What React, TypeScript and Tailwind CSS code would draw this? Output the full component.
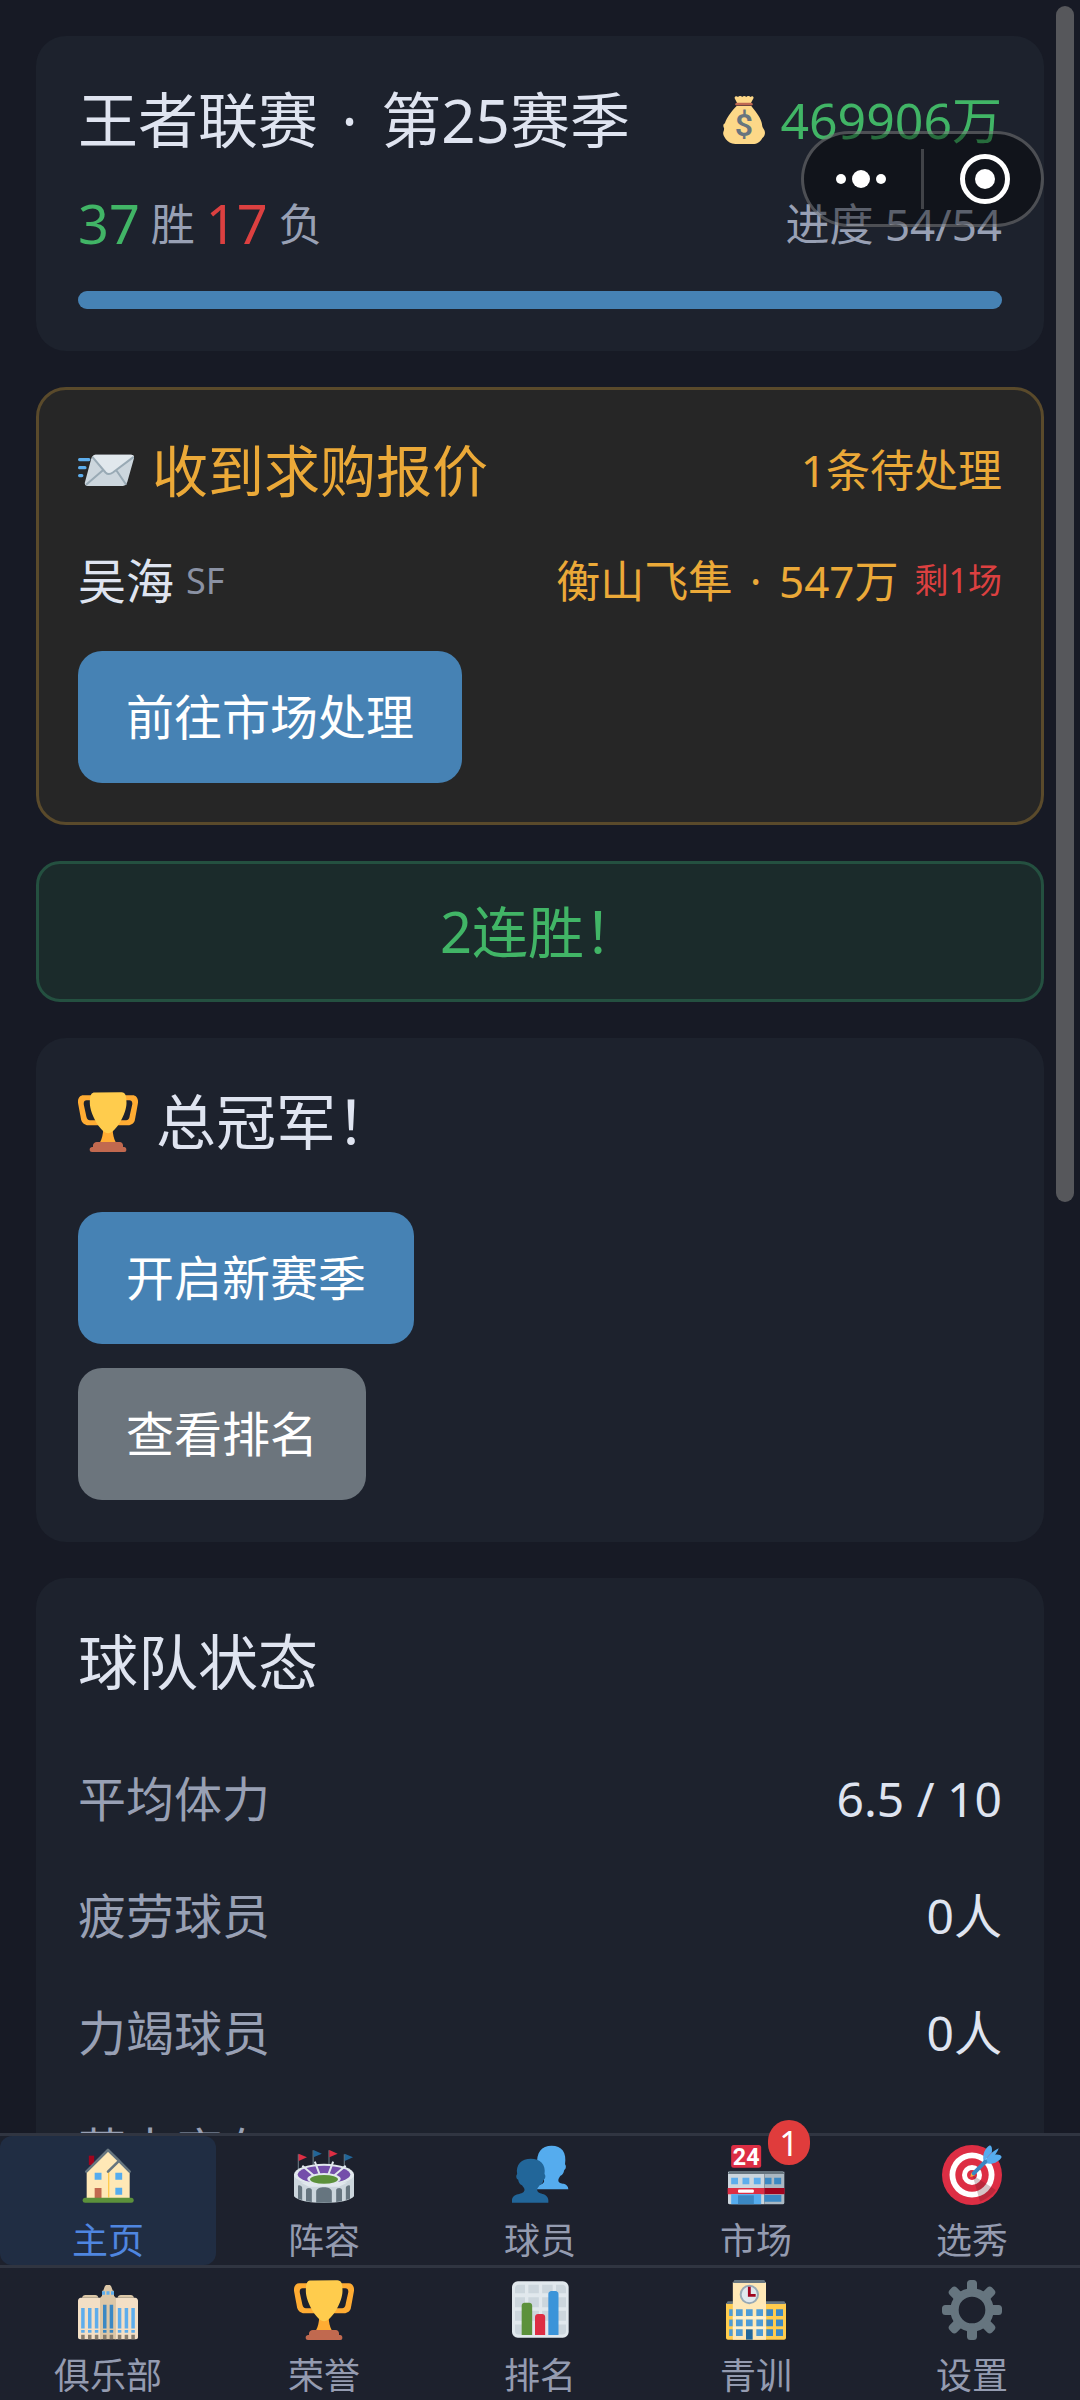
import { useState } from "react"
import type { ReactNode } from "react"

type IconProps = { className?: string; children?: ReactNode };

function Icon({ className = "size-15", children }: IconProps) {
  return (
    <svg viewBox="0 0 36 36" className={`shrink-0 ${className}`} aria-hidden="true">
      {children}
    </svg>
  );
}

function Trophy() {
  return (
    <Icon>
      <path fill="#FFAC33" d="M5.1 5h6C12.200 5 13 4.900 13 6V4c0-1.100-.8-2-1.900-2h-8c-2 0-3.600 2.100-3 5 0 0 1.800 9.400 1.900 10 .4 1.500 2.200 3 4.100 3H13v-5c0 1.100-.8 2-1.900 2h-4c-1.100 0-1.800-1-2-2S3.500 7.700 3.500 7.700C3.200 5.800 4 5 5.100 5zm25.800 0h-6C23.800 5 22 4.900 22 6V4c0-1.100 1.800-2 2.900-2h8c2 0 3.600 2.100 3 5 0 0-1.600 9.400-1.800 10-.3 1.500-2 3-4 3H22v-5c0 1.100 1.800 2 2.900 2h4c1.100 0 1.800-1 2-2s1.600-7.300 1.600-7.300c.4-1.900-.5-2.700-1.600-2.700zM20.800 22h-5.700c0 7-3.300 10-3.300 10h12.300s-3.300-3-3.300-10z" />
      <path fill="#FFCC4D" d="M29.100 6.600c0 6.800-6.800 18.200-11 18.200s-11-11.400-11-18.200c0-5.200 1-6.300 3-6.300l15-.1c2.900 0 4 .7 4 6.400z" />
      <path fill="#C1694F" d="M9 33v-1c0-1.100 1.200-2 2.200-2h13.900c1 0 1.900.9 1.900 2v1h.7c.8 0 1.300.6 1.300 1.400 0 1 0 1.600-1.300 1.600H8.500C7.200 36 7 35.400 7 34.400 7 33.600 7.700 33 8.500 33z" />
    </Icon>
  );
}

function MoneyBag() {
  return (
    <Icon className="size-12">
      <path fill="#FDD888" d="M12.500 7.500h11c2.500 3.300 6 7 7.600 12 .6 1.900.4 3.500 1.300 4.700 2 2.600 1.700 5.300-.6 7.300C30 34.500 28 36 24.500 36h-13C8 36 6 34.500 4.400 32.500c-.7-1.500-2.300-3-2-5 .1-1.200.9-1.900.6-3.500-.6-1.300-1-2.500.7-3.500C5 16 9 11 12.500 7.500z" />
      <path fill="#FDD888" d="M12.800 5.200 11 1.600c-.3-1.400 1.400-2 2.500-.9 1-1 2.400-.9 3.100 0 .9-.9 2.300-.9 3.100 0 .9-1 2.300-.9 3.100 0 1.300-1 2.700-.3 2.300 1l-1.900 3.500z" />
      <rect x="11.500" y="5" width="13" height="2.200" rx="1.100" fill="#BF6952" />
      <text x="18" y="30" textAnchor="middle" fontSize="24" fontWeight="600" fill="#67757F" fontFamily="Roboto, sans-serif">$</text>
    </Icon>
  );
}

function Envelope() {
  return (
    <Icon className="size-14">
      <path d="M1 11.300h6M1 16.500h3.500M1 21.600h1.500" stroke="#5DADEC" strokeWidth="2" strokeLinecap="round" />
      <path fill="#CCD6DD" d="M11.500 8.200h22.700c1.500 0 2.200 1.200 1.700 2.600l-4.200 14.900c-.5 1.500-1.700 2.600-3.200 2.600H6.200c-1.500 0-2.200-1.200-1.700-2.600l4-14.900c.4-1.500 1.600-2.600 3-2.600z" />
      <path d="m5.200 27.500 11-9.500M31 27.500l-6.500-9.500" stroke="#99AAB5" strokeWidth="1.300" />
      <path fill="#E1E8ED" d="M9.300 9.400c.6-.8 1.300-1.200 2.200-1.200h22.700c.9 0 1.500.5 1.700 1.200L22.500 19.600c-1.700 1.200-3.500 1.200-4.700 0z" />
      <path d="m9.200 9.600 8.500 10c1.200 1.200 3 1.200 4.700 0L35.800 9.600" fill="none" stroke="#99AAB5" strokeWidth="1.300" />
    </Icon>
  );
}

function House() {
  return (
    <Icon>
      <path fill="#A0041E" d="M6.500 6.400h3.200V12H6.500z" />
      <path fill="#FFE8B6" d="M5.200 15.500 18 3.200l6.500 6.500 6.500 6V32H5.200z" />
      <path d="M18.400 16v15.500" stroke="#FFCC4D" strokeWidth=".8" />
      <path d="M5 16 18 3l7 6.800M18 16l6.600-6.500L31 16" fill="none" stroke="#66757F" strokeWidth="1.600" strokeLinecap="round" strokeLinejoin="round" />
      <path fill="#55ACEE" d="M10 16.600h4.100v4.200H10zM22.400 16.600h4.100v4.200h-4.100zM22.400 25.600h4.100v4.200h-4.100z" />
      <path fill="#C1694F" d="M10 25.800h4.100V32H10z" />
      <rect x="2.800" y="31.600" width="30.600" height="3" rx="1.500" fill="#5C913B" />
    </Icon>
  );
}

function Stadium() {
  return (
    <Icon>
      <path d="M2.600 5.500V16M11.500 3.200V13M21 3.200V13M30.200 5.500V16" stroke="#66757F" strokeWidth=".7" />
      <path fill="#DD2E44" d="m2.800 5.200 5 2.200-5 2.200zM21.200 3l5 2.200-5 2.200z" />
      <path fill="#226699" d="m11.700 3 5 2.200-5 2.200zM30.400 5.200l5 2.200-5 2.200z" />
      <path fill="#CCD6DD" d="M0 17.500v13.300c2 2.500 9 4 18 4s16-1.500 18-4V17.500z" />
      <ellipse cx="18" cy="17.700" rx="18" ry="6.400" fill="#E1E8ED" />
      <ellipse cx="18" cy="17.700" rx="15.800" ry="5.200" fill="#744EAA" />
      <path d="m5 12.500 7 6M12.500 10l3 8M23.500 10l-3 8M31 12.500l-7 6" stroke="#E1E8ED" strokeWidth="1.200" />
      <path fill="#E1E8ED" d="M4 22.500h28L27 25H9z" />
      <ellipse cx="18" cy="20.300" rx="10" ry="3.500" fill="#E1E8ED" />
      <ellipse cx="18" cy="20.600" rx="8.400" ry="2.600" fill="#5C913B" />
      <path fill="#66757F" d="M13.300 34.600V28c0-3.500 9.400-3.500 9.400 0v6.600zM7.200 33.800V27c0-1.700 3.500-1.700 3.500 0v7.200zM25.300 34.200V27c0-1.700 3.500-1.700 3.500 0v6.800zM2.400 32.300v-7.600c0-1 2.500-.4 2.500 1V33zM31.100 33v-7.300c0-1.400 2.500-2 2.500-1v7.600z" />
    </Icon>
  );
}

function People() {
  return (
    <Icon>
      <path fill="#55ACEE" d="M14 26.600c0-3 6.500-2 6.500-5 0-1-1-2-1.700-3-1.200-.3-1.700-1.500-2-3-.8-.6-1-2.400-.4-3.300C15.500 4.500 19 .4 25 .4s9.200 4 8 11.200c.9.900.6 2.900-.5 3.500-.3 1.700-1 2.900-2.200 3.300-.6.900-1.300 1.700-1.300 2.700 0 1.700 1.800 1.900 3.300 2.200 1.500.4 2.700 1.500 2.700 3.300z" />
      <path fill="#226699" d="M1.200 34.600V33c0-2 1.700-3 3.600-3.500 2-.5 3.900-1 3.900-2.700 0-1-.8-1.700-1.500-2.700-1.300-.3-2-1.500-2.300-3.200-1.200-.6-1.500-2.600-.6-3.500-1-5.700 2.700-9.200 8.200-9.200s9.200 3.500 8.200 9.200c.9.900.6 2.900-.6 3.500-.3 1.700-1 2.900-2.300 3.200-.7 1-1.500 1.700-1.500 2.700 0 1.700 2 2.200 3.900 2.700C21.200 30 23 31 23 33v1.600z" />
    </Icon>
  );
}

function Store() {
  return (
    <Icon>
      <rect x="3.100" y="0" width="18" height="13.600" rx="1.500" fill="#DD2E44" />
      <text x="12.100" y="12" textAnchor="middle" fontSize="14" fontWeight="700" fill="#FFF" fontFamily="Roboto, sans-serif">24</text>
      <path fill="#CCD6DD" d="M1.200 16H23v19.600H2.200a1 1 0 0 1-1-1z" />
      <path fill="#AAB8C2" d="M23 16h12v18.600a1 1 0 0 1-1 1H23z" />
      <path fill="#66757F" d="M2 15.600h32l1 1.800H1.200z" />
      <path fill="#5DADEC" d="M3.100 19.600h4.100v4H3.100zM9.900 19.600H14v4H9.900zM16.700 19.600h4.100v4h-4.100z" />
      <path fill="#3B88C3" d="M23.300 19.600h4v4h-4zM28.900 19.600h4.200v4h-4.200zM23 30h10.200v4H23z" />
      <path fill="#DD2E44" d="M1 25.800h22v3.700H1z" />
      <path fill="#A0041E" d="M23 25.800h12.200v3.700H23z" />
      <path fill="#55ACEE" d="M3.100 29.500h18v6h-18z" />
      <path fill="#3B88C3" d="M7.200 30.200h9.500v5.300H7.200z" />
      <rect x="7.200" y="26.700" width="9.500" height="2" rx=".6" fill="#FFF" />
    </Icon>
  );
}

function Target() {
  return (
    <Icon>
      <circle cx="18" cy="18" r="18" fill="#DD2E44" />
      <circle cx="18" cy="18" r="13.500" fill="#FFF" />
      <circle cx="18" cy="18" r="10" fill="#DD2E44" />
      <circle cx="18" cy="18" r="6" fill="#FFF" />
      <circle cx="18" cy="18" r="3" fill="#DD2E44" />
      <path fill="#58181F" opacity=".25" d="m18.300 18 4.500 15.900c3.500-1.200 7.500-4 9.500-6.900z" />
      <path fill="#FFAC33" d="m17 19.200.6-2.700 2 1.900z" />
      <path fill="#55ACEE" d="M25 9.800C24 5.500 26 1.500 28.800.1c1.200.5 1.400 2.200 1.100 4.300zM26.200 11c4.300 1 8.200-1 9.600-3.800-.5-1.200-2.200-1.700-4.300-1.300z" />
      <path fill="#55ACEE" d="M24.500 11.500C26 8 30.500 3.500 34 2c-1 3.500-5.500 8-8.600 10z" />
      <path d="m19 17 7-7" stroke="#3A87C2" strokeWidth="2.400" strokeLinecap="round" />
    </Icon>
  );
}

function Club() {
  return (
    <Icon>
      <path fill="#F3DFC5" d="M0 12.500c0-1 .7-1.900 1.700-1.900H14v25H1.200C.5 35.600 0 35 0 34.400zM22 10.600h12.300c1 0 1.700.9 1.700 1.900v21.900c0 .6-.5 1.200-1.200 1.200H22z" />
      <path fill="#DCC7A7" d="M2.400 10.700c.2-1 1-1.700 2-1.700h6c1 0 1.700.7 1.900 1.700zM23.700 10.700c.2-1 1-1.700 2-1.700h6c1 0 1.700.7 1.900 1.700zM13.200 35.600V11l1.200-1.500V6.500h.7L16 4c.2-.7.700-1 1.400-1h1.200c.7 0 1.200.3 1.400 1l.9 2.500h.7v3l1.200 1.500v24.600z" />
      <path fill="#5DADEC" d="M14.400 6.800h1.800v2h-1.800zM17.100 6.800h1.800v2h-1.800zM19.800 6.800h1.800v2h-1.800zM1.900 16.800H4v12.300H1.900zM6 16.800h2.100v12.300H6zM10.100 16.800h2.100v12.300h-2.100zM23.900 16.800H26v12.300h-2.100zM28 16.800h2.100v12.300H28zM32 16.800h2.100v12.300H32zM1.900 30H4v1.600H1.900zM6 30h2.100v1.600H6zM10.100 30h2.100v1.600h-2.100zM23.900 30H26v1.600h-2.100zM28 30h2.100v1.600H28zM32 30h2.100v1.600H32z" />
      <path fill="#3B88C3" d="M15 14.800h2.100v14.300H15zM19 14.800h2.100v14.300H19zM15 30h2.100v1.600H15zM19 30h2.100v1.600H19z" />
      <path fill="#857B6C" d="M1.900 32.800H4v2.800H1.900zM6 32.800h2.100v2.800H6zM10.100 32.800h2.100v2.800h-2.100zM15 32.800h2.100v2.800H15zM19 32.800h2.100v2.800H19zM23.900 32.800H26v2.800h-2.100zM28 32.800h2.100v2.800H28zM32 32.800h2.100v2.800H32z" />
    </Icon>
  );
}

function Chart() {
  return (
    <Icon>
      <rect x="1.200" y=".7" width="34" height="34" rx="3.500" fill="#E1E8ED" />
      <path fill="#CCD6DD" d="M3 5c0-1.200.8-2.200 2-2.200h4V8H3zM11 2.800h6.300V8H11zM19.300 2.800h6.300V8h-6.300zM27.600 2.800h4c1.200 0 2 1 2 2.200v3h-6zM3 10.300h6v6H3zM11 10.300h6.300v6H11zM19.300 10.300h6.300v6h-6.300zM27.600 10.300h6v6h-6zM3 18.500h6v6H3zM11 18.500h6.300v6H11zM19.300 18.500h6.300v6h-6.300zM27.600 18.500h6v6h-6zM3 26.700h6v6H5c-1.200 0-2-.8-2-2zM27.600 26.700h6v4c0 1.200-.8 2-2 2h-4z" />
      <path fill="#5C913B" d="M7 33V15.400c0-1 .8-1.800 1.800-1.800h2.700c1 0 1.800.8 1.800 1.800V33z" />
      <path fill="#DD2E44" d="M15 33V22.200c0-1 .8-1.800 1.800-1.800h2.500c1 0 1.800.8 1.800 1.800V33z" />
      <path fill="#3B94D9" d="M23 33V8.400c0-1 .8-1.800 1.800-1.800h2.500c1 0 1.800.8 1.800 1.800V33z" />
    </Icon>
  );
}

function School() {
  return (
    <Icon>
      <path fill="#FFCC4D" d="M0 14h36v20.600c0 .7-.5 1.200-1.200 1.200H1.200C.5 35.800 0 35.300 0 34.600z" />
      <path fill="#66757F" d="M1 12.800h3.100v1.600H0zM24 12.800h11l1 1.600H24z" />
      <path fill="#FFE8B6" d="M4.100 1.200H24v34.600H4.100z" />
      <path fill="#66757F" d="M5 0h18l1 1.800H4.100z" />
      <circle cx="14" cy="8.700" r="5.200" fill="#E1E8ED" stroke="#99AAB5" strokeWidth="1.200" />
      <path d="M14 4v5.200h3.800" fill="none" stroke="#A0041E" strokeWidth="1.700" />
      <path fill="#FFF1CF" d="M4.100 22h20v1.200h-20zM4.100 28h20v1.200h-20z" />
      <path fill="#4E9CD6" d="M1.900 17.600H4v4H1.900zM6 17.600h4v4H6zM12 17.600h4v4h-4zM18.200 17.600h4v4h-4zM1.900 23.700H4v4H1.900zM6 23.700h4v4H6zM12 23.700h4v4h-4zM18.200 23.700h4v4h-4zM1.900 29.600H4v4H1.900zM6 29.600h4v4H6zM18.200 29.600h4v4h-4z" />
      <path fill="#3B88C3" d="M24.200 17.600h4v4h-4zM30 17.600h4.200v4H30zM24.200 23.700h4v4h-4zM30 23.700h4.200v4H30zM24.200 29.600h4v4h-4zM30 29.600h4.200v4H30z" />
      <path fill="#269" d="M12 29.600h4v6.200h-4z" />
    </Icon>
  );
}

function Gear() {
  const teeth = [0, 45, 90, 135, 180, 225, 270, 315];
  return (
    <Icon>
      <circle cx="18" cy="18" r="10.500" fill="none" stroke="#66757F" strokeWidth="5" />
      {teeth.map((deg) => (
        <path key={deg} fill="#66757F" transform={`rotate(${deg} 18 18)`} d="M13.500 7.500c1.500-1 1.500-2 1.500-3V2c0-1.200.8-2 2-2h2c1.200 0 2 .8 2 2v2.500c0 1 0 2 1.500 3z" />
      ))}
    </Icon>
  );
}

const stats = [
  { label: "平均体力", value: "6.5 / 10" },
  { label: "疲劳球员", value: "0人" },
  { label: "力竭球员", value: "0人" },
  { label: "药水库存", value: "7/10" },
];

const mainTabs = [
  { name: "主页", icon: <House /> },
  { name: "阵容", icon: <Stadium /> },
  { name: "球员", icon: <People /> },
  { name: "市场", icon: <Store />, badge: 1 },
  { name: "选秀", icon: <Target /> },
];

const moreTabs = [
  { name: "俱乐部", icon: <Club /> },
  { name: "荣誉", icon: <Trophy /> },
  { name: "排名", icon: <Chart /> },
  { name: "青训", icon: <School /> },
  { name: "设置", icon: <Gear /> },
];

type TabProps = {
  tab: { name: string; icon: ReactNode; badge?: number };
  isActive: boolean;
  className: string;
  onClick: () => void;
};

function Tab({ tab, isActive, className, onClick }: TabProps) {
  return (
    <button
      type="button"
      onClick={onClick}
      className={`relative flex flex-col items-center gap-3 rounded-xl text-[36px] leading-[48px] 
      ${isActive ? "bg-[#202d43] text-[#4f86e0]" : "text-[#949bb0]"} ${className}`}
    >
      {tab.icon}
      <span>{tab.name}</span>
      {tab.badge && (
        <span className="absolute -top-4 right-[54px] flex h-[45px] w-[42px] items-center justify-center rounded-full bg-[#e03c3c] text-[34px] text-white">
          {tab.badge}
        </span>
      )}
    </button>
  );
}

function Card({ children }: { children: ReactNode }) {
  return <section className="shrink-0 rounded-[30px] bg-[#1d222d] p-[42px]">{children}</section>;
}

function Button({ color, children }: { color: string; children: ReactNode }) {
  return (
    <button type="button" className={`h-33 rounded-3xl px-12 text-[48px] text-white ${color}`}>
      {children}
    </button>
  );
}

export default function App() {
  const [active, setActive] = useState("主页");

  return (
    <div className="flex h-screen flex-col overflow-hidden bg-[#171a25] font-['Noto_Sans','Noto_Sans_CJK_SC',sans-serif] text-[#dfe4f0]">
      <main className="flex min-h-0 flex-1 flex-col gap-9 overflow-y-auto px-9 pt-9 [scrollbar-width:none]">
        <Card>
          <div className="flex h-21 items-center justify-between">
            <h1 className="text-[60px]">
              王者联赛<span className="mx-2"> · </span>第25赛季
            </h1>
            <div className="flex items-center gap-3 text-[50px] text-[#41b566]">
              <MoneyBag />
              <span>469906万</span>
            </div>
          </div>
          <div className="mt-6 flex h-[75px] items-center justify-between text-[44px] text-[#98a0b4]">
            <p className="flex items-center gap-[11px]">
              <span className="text-[54px] text-[#41b566]">37</span>
              <span>胜</span>
              <span className="text-[54px] text-[#dc4040]">17</span>
              <span>负</span>
            </p>
            <p>进度 54/54</p>
          </div>
          <div className="mt-[30px] h-[18px] rounded-full bg-[#2a303d]" role="progressbar" aria-label="进度" aria-valuenow={54} aria-valuemax={54}>
            <div className="h-full w-full rounded-full bg-[#4682b4]" />
          </div>
        </Card>

        <section className="shrink-0 rounded-[30px] border-3 border-[#5a4a2b] bg-[#262626] p-[39px] text-[#eba938]">
          <div className="flex h-[81px] items-center justify-between">
            <h2 className="flex items-center gap-[18px] text-[56px]">
              <Envelope />
              收到求购报价
            </h2>
            <span className="text-[44px]">1条待处理</span>
          </div>
          <div className="my-9 flex h-[69px] items-center justify-between">
            <p className="flex items-center gap-3">
              <span className="text-[48px] text-[#dfe4f0]">吴海</span>
              <span className="text-[36px] text-[#8a91a3]">SF</span>
            </p>
            <p className="flex items-center gap-4">
              <span className="text-[44px]">
                衡山飞隼<span className="mx-[6px]"> · </span>547万
              </span>
              <span className="text-[34px] text-[#dc4040]">剩1场</span>
            </p>
          </div>
          <Button color="bg-[#4682b4]">前往市场处理</Button>
        </section>

        <section className="shrink-0 rounded-3xl border-3 border-[#245040] bg-[#1b2b2b] py-[27px] text-center text-[56px] leading-[81px] text-[#41b566]">
          2连胜！
        </section>

        <Card>
          <h2 className="flex h-21 items-center gap-[18px] text-[60px]">
            <Trophy />
            总冠军！
          </h2>
          <div className="mt-12 flex flex-col items-start gap-6">
            <Button color="bg-[#4682b4]">开启新赛季</Button>
            <Button color="bg-[#6c757d]">查看排名</Button>
          </div>
        </Card>

        <Card>
          <h2 className="mb-9 text-[60px] leading-[84px]">球队状态</h2>
          <dl className="text-[48px] leading-[117px]">
            {stats.map((s) => (
              <div key={s.label} className="flex justify-between">
                <dt className="text-[#98a0b4]">{s.label}</dt>
                <dd>{s.value}</dd>
              </div>
            ))}
          </dl>
        </Card>
      </main>

      <nav className="relative shrink-0 bg-[#1d212d]">
        <div className="grid grid-cols-5 border-t-3 border-[#303541]">
          {mainTabs.map((tab) => (
            <Tab key={tab.name} tab={tab} isActive={active === tab.name} className="pt-[9px]" onClick={() => setActive(tab.name)} />
          ))}
        </div>
        <div className="grid grid-cols-5 border-t-3 border-[#303541]">
          {moreTabs.map((tab) => (
            <Tab key={tab.name} tab={tab} isActive={active === tab.name} className="pt-3" onClick={() => setActive(tab.name)} />
          ))}
        </div>
      </nav>

      {/* floating capsule menu */}
      <div className="fixed top-[131px] right-9 flex h-24 w-[243px] items-center rounded-full border-3 border-white/25 bg-black/40">
        <button type="button" aria-label="更多" className="flex h-full flex-1 items-center justify-center gap-[6px] pr-1">
          <span className="size-[10px] rounded-full bg-white" />
          <span className="size-[18px] rounded-full bg-white" />
          <span className="size-[10px] rounded-full bg-white" />
        </button>
        <span className="h-15 w-[3px] bg-white/20" />
        <button type="button" aria-label="关闭" className="flex h-full flex-1 items-center justify-center pl-1">
          <span className="flex size-[50px] items-center justify-center rounded-full border-5 border-white">
            <span className="size-5 rounded-full bg-white" />
          </span>
        </button>
      </div>

      <div className="fixed top-[6px] right-[6px] h-[1196px] w-[18px] rounded-full bg-[#56575b]" />
    </div>
  );
}
